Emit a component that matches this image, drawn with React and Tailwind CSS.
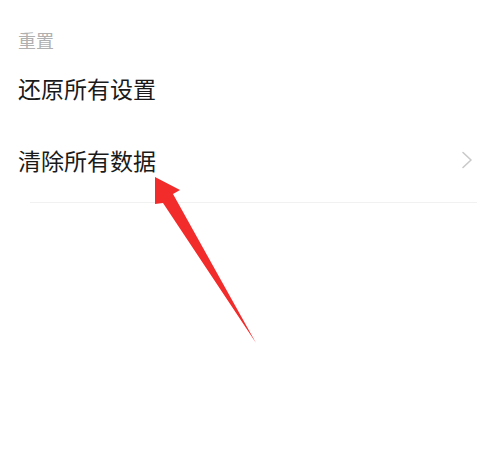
import React from 'react';

const font = { fontFamily: '"Noto Sans CJK SC", "Noto Sans", sans-serif' };

function Row({ label, chevron }) {
  return (
    <div className="flex items-center justify-between h-[72px] pl-[18px] pr-[22px]">
      <span className="text-[23px] leading-[30px] text-[#1a1a1a]">{label}</span>
      {chevron && (
        <svg width="12" height="18" viewBox="0 0 12 18" fill="none">
          <path d="M2 1.5 L10 9 L2 16.5" stroke="#c9c9c9" strokeWidth="1.6" strokeLinecap="round" strokeLinejoin="round" />
        </svg>
      )}
    </div>
  );
}

export default function App() {
  return (
    <div className="relative w-[495px] h-[455px] bg-white overflow-hidden" style={font}>
      <div className="pt-[28px]">
        <div className="pl-[18px] text-[18px] leading-[24px] text-[#b0b0b0]">重置</div>
        <div>
          <Row label="还原所有设置" />
          <Row label="清除所有数据" chevron />
        </div>
        <div className="ml-[30px] mr-[18px] mt-[6px] h-px bg-[#f1f1f1]" />
      </div>

      {/* red pointer arrow */}
      <svg className="absolute left-0 top-0 pointer-events-none" width="495" height="455" viewBox="0 0 495 455">
        <polygon
          points="155,177 180,190 173,194 256,343 163,203 155,204"
          fill="#f22b2b"
        />
      </svg>
    </div>
  );
}
